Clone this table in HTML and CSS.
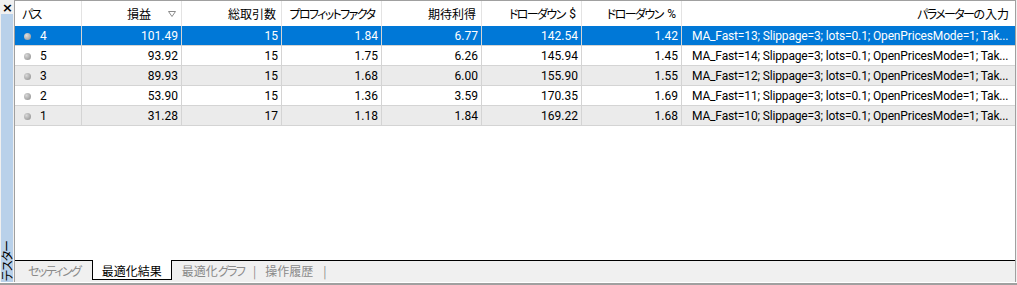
FILE: index.html
```html
<!DOCTYPE html>
<html lang="ja">
<head>
<meta charset="utf-8">
<link rel="stylesheet" href="styles.css">
</head>
<body>
<div class="app">
  <div class="side">
    <div class="close">×</div>
    <div class="strip"><span class="vtext">テスター</span></div>
  </div>
  <div class="main">
    <div class="grid">
      <div class="row head">
        <div class="c first"><span class="k">パス</span></div>
        <div class="c num">損益<span class="sort"><svg width="8" height="6" viewBox="0 0 8 6"><path d="M0.5 0.5 H7.5 L4 5.5 Z" fill="none" stroke="#8a8a8a" stroke-width="1"/></svg></span></div>
        <div class="c num">総取引数</div>
        <div class="c num"><span class="k">プロフィットファクタ</span></div>
        <div class="c num">期待利得</div>
        <div class="c num"><span class="k">ドローダウン</span>&nbsp;$</div>
        <div class="c num"><span class="k">ドローダウン</span>&nbsp;%</div>
        <div class="c num last"><span class="k">パラメーターの</span>入力</div>
      </div>
      <div class="row sel">
        <div class="c first"><span class="dot"></span>4</div>
        <div class="c num">101.49</div><div class="c num">15</div><div class="c num">1.84</div><div class="c num">6.77</div><div class="c num">142.54</div><div class="c num">1.42</div>
        <div class="c par">MA_Fast=13; Slippage=3; lots=0.1; OpenPricesMode=1; Tak...</div>
      </div>
      <div class="row">
        <div class="c first"><span class="dot"></span>5</div>
        <div class="c num">93.92</div><div class="c num">15</div><div class="c num">1.75</div><div class="c num">6.26</div><div class="c num">145.94</div><div class="c num">1.45</div>
        <div class="c par">MA_Fast=14; Slippage=3; lots=0.1; OpenPricesMode=1; Tak...</div>
      </div>
      <div class="row alt">
        <div class="c first"><span class="dot"></span>3</div>
        <div class="c num">89.93</div><div class="c num">15</div><div class="c num">1.68</div><div class="c num">6.00</div><div class="c num">155.90</div><div class="c num">1.55</div>
        <div class="c par">MA_Fast=12; Slippage=3; lots=0.1; OpenPricesMode=1; Tak...</div>
      </div>
      <div class="row">
        <div class="c first"><span class="dot"></span>2</div>
        <div class="c num">53.90</div><div class="c num">15</div><div class="c num">1.36</div><div class="c num">3.59</div><div class="c num">170.35</div><div class="c num">1.69</div>
        <div class="c par">MA_Fast=11; Slippage=3; lots=0.1; OpenPricesMode=1; Tak...</div>
      </div>
      <div class="row alt">
        <div class="c first"><span class="dot"></span>1</div>
        <div class="c num">31.28</div><div class="c num">17</div><div class="c num">1.18</div><div class="c num">1.84</div><div class="c num">169.22</div><div class="c num">1.68</div>
        <div class="c par">MA_Fast=10; Slippage=3; lots=0.1; OpenPricesMode=1; Tak...</div>
      </div>
    </div>
    <div class="tabs">
      <div class="tab t1"><span class="k">セッティング</span></div>
      <div class="tab active">最適化結果</div>
      <div class="tab t3">最適化<span class="k">グラフ</span></div>
      <div class="sep">|</div>
      <div class="tab t4">操作履歴</div>
      <div class="sep">|</div>
      <div class="fill"></div>
    </div>
  </div>
</div>
<div class="bottom"></div>
</body>
</html>
```

FILE: styles.css
```css
* { box-sizing: border-box; }
html, body { margin: 0; padding: 0; }
body {
  width: 1017px;
  height: 285px;
  background: #f0f0f0;
  font-family: Roboto, "Noto Sans CJK JP", sans-serif;
  font-size: 12px;
  font-feature-settings: "palt";
  color: #000;
  overflow: hidden;
}
.k { letter-spacing: -1.6px; margin-right: 1.6px; }
.app {
  display: flex;
  height: 282px;
}
.side {
  width: 14px;
  display: flex;
  flex-direction: column;
  background: #f0f0f0;
}
.close {
  height: 14px;
  font-size: 13px;
  font-weight: bold;
  line-height: 15px;
  padding-left: 2px;
  font-family: "DejaVu Sans", sans-serif;
}
.strip {
  flex: 1;
  margin-left: 1px;
  margin-right: 1px;
  background: #b9d1ea;
  display: flex;
  flex-direction: column;
  justify-content: flex-end;
  align-items: center;
}
.vtext {
  writing-mode: vertical-rl;
  text-orientation: sideways;
  transform: rotate(180deg);
  font-family: "Noto Sans CJK JP", sans-serif;
  font-size: 12px;
  line-height: 12px;
  letter-spacing: -1px;
  padding-top: 1px;
}
.main {
  flex: 1;
  display: flex;
  flex-direction: column;
  border-left: 1px solid #a0a0a0;
  border-top: 1px solid #a0a0a0;
  border-right: 1px solid #a0a0a0;
  margin-right: 1px;
}
.grid {
  flex: 1;
  background: #fff;
}
.row {
  display: grid;
  grid-template-columns: 67px 100px 100px 100px 100px 100px 100px 332px;
  height: 20px;
  border-bottom: 1px solid #d4d4d4;
  background: #fff;
}
.row.alt { background: #ebebeb; }
.row.sel { background: #0078d7; color: #fff; }
.row.head {
  height: 25px;
  border-bottom: none;
}
.c {
  border-right: 1px solid #d4d4d4;
  display: flex;
  align-items: center;
  white-space: nowrap;
  overflow: hidden;
  padding: 0 3px;
}
.head .c { border-right-color: #e3e3e3; padding-right: 5px; }
.num { justify-content: flex-end; }
.first { padding-left: 9px; }
.head .first { padding-left: 7px; }
.par { padding-left: 10px; letter-spacing: -0.15px; }
.c.last, .c.par { border-right: none; }
.sort {
  display: inline-flex;
  margin-left: 17px;
  margin-right: 0;
  align-items: center;
}
.dot {
  width: 7px;
  height: 7px;
  border-radius: 50%;
  background: radial-gradient(circle at 35% 35%, #d8d8d8, #8a8a8a);
  margin-right: 9px;
  margin-top: 1px;
}
.sel .dot { background: radial-gradient(circle at 35% 35%, #e0e0e0, #8f8f8f); }
.tabs {
  height: 22px;
  display: flex;
  align-items: flex-start;
  background: #f0f0f0;
  color: #8a8a8a;
  font-family: "Noto Sans CJK JP", sans-serif;
}
.tab {
  height: 20px;
  line-height: 19px;
  border-top: 1px solid #000;
  padding: 0 10px;
}
.tab.t1 { padding-left: 13px; }
.tab.t3 { padding-right: 7px; }
.tab.t4 { padding-left: 9px; }
.tab.active {
  background: #fff;
  color: #000;
  border: 1px solid #000;
  border-top: none;
  padding: 1px 9px 0 9px;
}
.sep {
  height: 20px;
  line-height: 19px;
  border-top: 1px solid #000;
}
.fill {
  flex: 1;
  height: 20px;
  border-top: 1px solid #000;
}
.bottom {
  height: 3px;
  border-top: 1px solid #fff;
  background: #a0a0a0;
}
```
